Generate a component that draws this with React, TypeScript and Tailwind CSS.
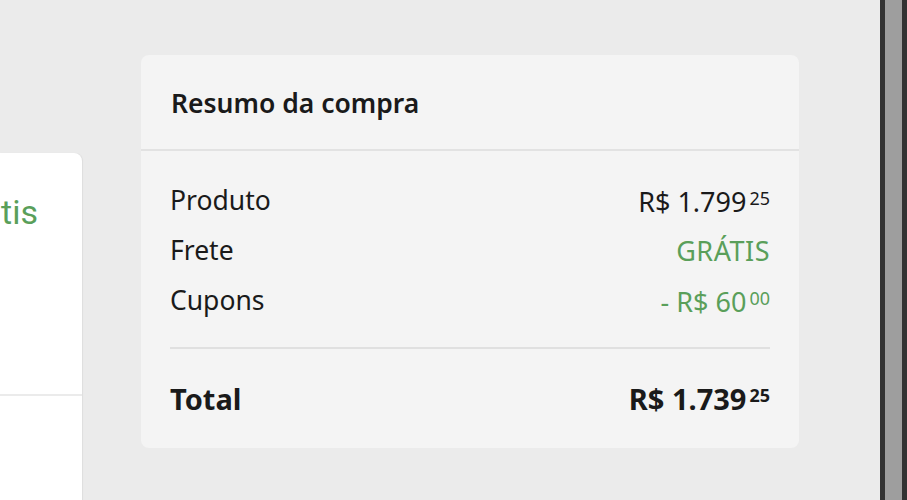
const font = { fontFamily: '"Noto Sans", Lato, sans-serif' }

function Price({ int, cents, className = '', centsTop = 'mt-[2px]' }: { int: string; cents: string; className?: string; centsTop?: string }) {
  return (
    <span className={`flex items-start leading-none ${className}`}>
      <span className="leading-none">{int}</span>
      <span className={`text-[18px] leading-none ml-[3px] ${centsTop}`}>{cents}</span>
    </span>
  )
}

function Row({ label, children }: { label: string; children: React.ReactNode }) {
  return (
    <div className="h-[50px] flex items-center justify-between">
      <span className="text-[26.5px] text-[#1a1a1a]">{label}</span>
      {children}
    </div>
  )
}

export default function App() {
  return (
    <div className="h-[500px] w-full bg-[#ebebeb] flex overflow-hidden" style={font}>
      <div className="w-[82px] shrink-0 pt-[153px]">
        <div className="h-full bg-white rounded-tr-[8px] overflow-hidden shadow-[1px_0_1px_rgba(0,0,0,0.06)]">
          <div className="h-[243px] border-b-2 border-[#ebebeb] flex justify-end pr-[44px] pt-[30px]">
            <span className="shrink-0 text-[34px] leading-[58px] text-[#5a9f5a] whitespace-nowrap" style={{ fontFamily: 'Roboto, sans-serif' }}>
              Grátis
            </span>
          </div>
        </div>
      </div>

      <div className="ml-[59px] mt-[55px] w-[658px] h-[393px] shrink-0 bg-[#f4f4f4] rounded-[8px] flex flex-col">
        <div className="h-[96px] border-b-2 border-[#e2e2e2] px-[30px] pt-[3px] flex items-center">
          <h2 className="text-[26.5px] font-semibold text-[#1a1a1a]">Resumo da compra</h2>
        </div>
        <div className="px-[29px] pt-[25px]">
          <Row label="Produto">
            <Price int="R$ 1.799" cents="25" centsTop="mt-[1px]" className="text-[27px] text-[#1a1a1a]" />
          </Row>
          <Row label="Frete">
            <span className="text-[27px] tracking-[0.5px] text-[#5a9f5a]">GRÁTIS</span>
          </Row>
          <Row label="Cupons">
            <Price int="- R$ 60" cents="00" centsTop="mt-[1px]" className="text-[27px] text-[#5a9f5a]" />
          </Row>
          <div className="mt-[21px] border-t-2 border-[#e0e0e0]" />
          <div className="h-[99px] flex items-center justify-between">
            <span className="text-[29px] font-bold text-[#1a1a1a]">Total</span>
            <Price int="R$ 1.739" cents="25" centsTop="mt-[2px]" className="text-[29px] font-bold text-[#1a1a1a]" />
          </div>
        </div>
      </div>

      <div className="flex-1" />
      <div className="w-[27px] shrink-0 flex">
        <div className="w-[5px] bg-[#333333]" />
        <div className="w-[17px] bg-[#9e9e9e]" />
        <div className="w-[5px] bg-[#333333]" />
      </div>
    </div>
  )
}
